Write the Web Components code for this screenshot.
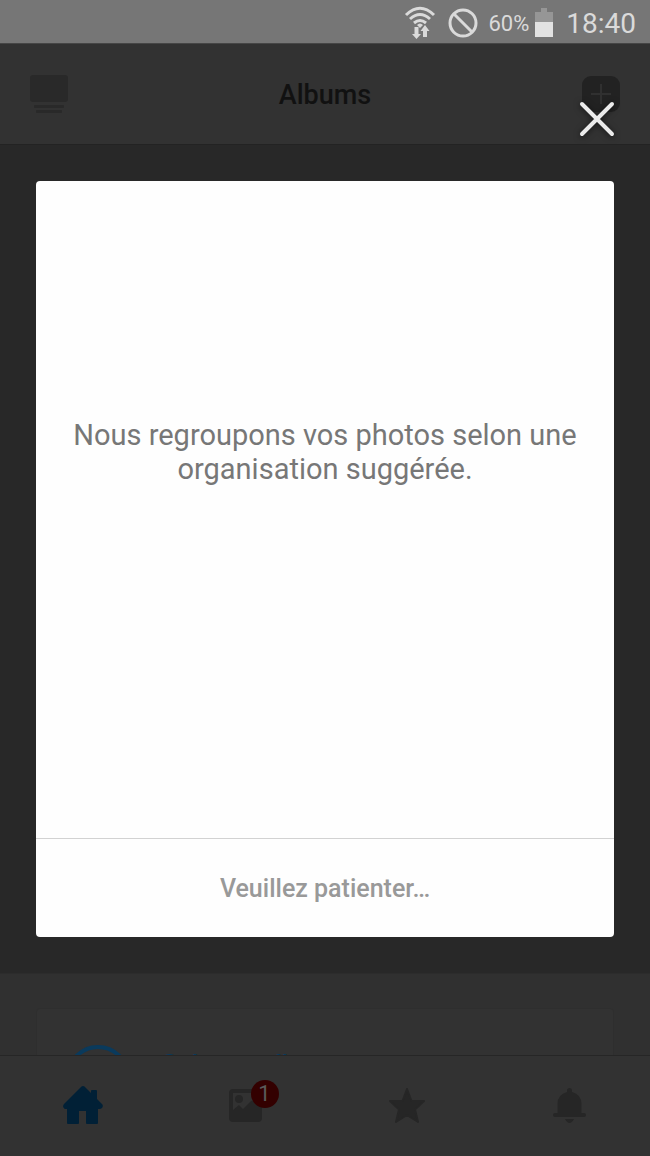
<!DOCTYPE html>
<html lang="fr">
<head>
<meta charset="utf-8">
<meta name="viewport" content="width=device-width, initial-scale=1">
<title>Albums</title>
<style>
  body {
    margin: 0;
    font-family: Roboto, "Liberation Sans", sans-serif;
    background: #282828;
  }
</style>
</head>
<body>
<albums-app></albums-app>

<script>
class StatusBar extends HTMLElement {
  constructor() {
    super();
    this.attachShadow({ mode: 'open' });
  }

  connectedCallback() {
    this.shadowRoot.innerHTML = `
      <style>
        :host {
          display: flex;
          align-items: center;
          justify-content: flex-end;
          height: 43px;
          padding: 2px 14px 0;
          box-sizing: border-box;
          background: #767676;
          color: #dadada;
        }
        svg { display: block; }
        .wifi { margin-right: 12px; }
        .block { margin-right: 10px; }
        .level { font-size: 22px; line-height: 40px; padding-top: 2px; }
        .battery { margin: 0 13px 0 6px; }
        .clock { font-size: 28px; line-height: 40px; padding-top: 2px; }
      </style>
      <svg class="wifi" width="32" height="34" viewBox="0 0 32 34" fill="none" stroke="#dadada" stroke-width="3">
        <path d="M2 9Q16-4.500 30 9"/>
        <path d="M6 13Q16 4 26 13"/>
        <path d="M10 17Q16 12 22 17"/>
        <path d="M13 19Q16 16 19 19L16 22Z" fill="#dadada" stroke="none"/>
        <path d="M10.500 21H14.500V28H17L12.500 33L8 28H10.500ZM19 31V25H16.500L21 19L25.500 25H23V31Z" fill="#dadada" stroke="none"/>
      </svg>
      <svg class="block" width="30" height="30" viewBox="0 0 30 30" fill="none" stroke="#dadada" stroke-width="3">
        <circle cx="15" cy="15" r="13"/>
        <path d="M6 6L24 24"/>
      </svg>
      <span class="level">60%</span>
      <svg class="battery" width="18" height="29" viewBox="0 0 18 29">
        <path fill="#969696" d="M6 0H12V4H18V14H0V4H6Z"/>
        <path fill="#e2e2e2" d="M0 14H18V29H0Z"/>
      </svg>
      <span class="clock">18:40</span>
    `;
  }
}
customElements.define('status-bar', StatusBar);

class AppHeader extends HTMLElement {
  constructor() {
    super();
    this.attachShadow({ mode: 'open' });
  }

  connectedCallback() {
    this.shadowRoot.innerHTML = `
      <style>
        :host {
          display: grid;
          grid-template-columns: 1fr auto 1fr;
          align-items: center;
          height: 102px;
          padding: 0 30px;
          box-sizing: border-box;
          background: #323232;
          border-top: 1px solid #464646;
          border-bottom: 1px solid #232323;
        }
        h1 {
          margin: 0;
          padding-top: 2px;
          font-size: 27px;
          font-weight: 500;
          line-height: 32px;
          color: #111;
        }
        button {
          display: block;
          padding: 0;
          border: 0;
          background: none;
        }
        .add { justify-self: end; }
        svg { display: block; }
      </style>
      <button aria-label="Diaporama">
        <svg width="38" height="38" viewBox="0 0 38 38" fill="#292929">
          <rect width="38" height="27" rx="3"/>
          <rect x="4" y="30" width="30" height="3" rx="1"/>
          <rect x="6" y="35" width="26" height="3" rx="1"/>
        </svg>
      </button>
      <h1><slot></slot></h1>
      <button class="add" aria-label="Ajouter">
        <svg width="38" height="36" viewBox="0 0 38 36">
          <rect width="38" height="36" rx="9" fill="#222"/>
          <path d="M9 18H29M19 8V28" stroke="#303030" stroke-width="2"/>
        </svg>
      </button>
    `;
  }
}
customElements.define('app-header', AppHeader);

class PromoCard extends HTMLElement {
  constructor() {
    super();
    this.attachShadow({ mode: 'open' });
  }

  connectedCallback() {
    this.shadowRoot.innerHTML = `
      <style>
        /* the tab bar hides the lower part of the card */
        :host {
          display: block;
          height: 82px;
          padding: 34px 36px 0;
          box-sizing: border-box;
          overflow: hidden;
          background: #303030;
          border-top: 1px solid #2c2c2c;
        }
        .card {
          display: flex;
          align-items: flex-start;
          gap: 32px;
          height: 160px;
          padding: 36px 32px;
          box-sizing: border-box;
          background: #323232;
          border: 1px solid #2e2e2e;
          border-radius: 4px;
        }
        svg { display: block; }
        a {
          padding-top: 4px;
          font-size: 25px;
          font-weight: 500;
          line-height: 32px;
          color: #0a3a5c;
          text-decoration: none;
        }
      </style>
      <div class="card">
        <svg width="60" height="60" viewBox="0 0 60 60" fill="none" stroke="#0a3a5c" stroke-width="4">
          <circle cx="29" cy="32" r="30"/>
        </svg>
        <a href="#"><slot></slot></a>
      </div>
    `;
  }
}
customElements.define('promo-card', PromoCard);

class TabBar extends HTMLElement {
  constructor() {
    super();
    this.attachShadow({ mode: 'open' });
  }

  connectedCallback() {
    this.shadowRoot.innerHTML = `
      <style>
        :host {
          display: block;
          background: #323232;
          border-top: 1px solid #262626;
        }
        nav {
          display: grid;
          grid-template-columns: repeat(4, 1fr);
          height: 100px;
          padding: 0 0 2px 2px;
          box-sizing: border-box;
        }
        a {
          display: flex;
          align-items: center;
          justify-content: center;
          color: #262626;
        }
        .home { color: #012036; }
        svg { display: block; }
        .photo { position: relative; }
        .badge {
          position: absolute;
          top: -9px;
          left: 22px;
          width: 28px;
          height: 28px;
          border-radius: 50%;
          background: #330000;
          color: #5a5a5a;
          font-size: 22px;
          line-height: 28px;
          text-align: center;
        }
      </style>
      <nav>
        <a class="home" href="#" aria-label="Accueil">
          <svg width="40" height="38" viewBox="0 0 40 38" fill="currentColor">
            <path d="M18.500 .6Q20 -.6 21.500 .6L28 7V5Q28 4 29 4H33Q34 4 34 5V13L39.200 18.300Q40.500 20 39 22Q38 23 36 23H35V37Q35 38 34 38H24Q23 38 23 37V25H16V37Q16 38 15 38H5Q4 38 4 37V23H3Q1 23 .5 21.500Q-.5 20 1 18Z"/>
          </svg>
        </a>
        <a href="#" aria-label="Photos">
          <span class="photo">
            <svg width="33" height="33" viewBox="0 0 33 33">
              <rect width="33" height="33" rx="4" fill="#262626"/>
              <path d="M4 4H29V10L22 12L14 20L10 16L4 21Z" fill="#323232"/>
              <circle cx="10" cy="10" r="4" fill="#262626"/>
            </svg>
            <span class="badge">1</span>
          </span>
        </a>
        <a href="#" aria-label="Favoris">
          <svg width="36" height="35" viewBox="0 0 36 35" fill="currentColor" stroke="currentColor" stroke-width="2" stroke-linejoin="round">
            <path d="M18 1L22.500 13H35L26 21.500L29 34L18 27L7 34L10 21.500L1 13H13.500Z"/>
          </svg>
        </a>
        <a href="#" aria-label="Notifications">
          <svg width="33" height="35" viewBox="0 0 33 35" fill="currentColor">
            <path d="M14 4V2.500A2.500 2.500 0 0 1 19 2.500V4Q28.500 6.500 28.500 16V25H31A2 2 0 0 1 31 29H2A2 2 0 0 1 2 25H4.500V16Q4.500 6.500 14 4ZM12 31H21Q19 35 16.500 35T12 31Z"/>
          </svg>
        </a>
      </nav>
    `;
  }
}
customElements.define('tab-bar', TabBar);

class WaitDialog extends HTMLElement {
  constructor() {
    super();
    this.attachShadow({ mode: 'open' });
  }

  connectedCallback() {
    this.shadowRoot.innerHTML = `
      <style>
        /* lies over the whole page */
        :host {
          position: absolute;
          inset: 0;
          display: flex;
          flex-direction: column;
          padding: 97px 36px 219px;
          box-sizing: border-box;
        }
        .close {
          align-self: flex-end;
          margin-bottom: 40px;
          padding: 4px 0;
          border: 0;
          background: none;
        }
        .close svg { display: block; overflow: visible; filter: drop-shadow(0 1px 3px rgba(0, 0, 0, .6)); }
        .dialog {
          flex: 1;
          display: flex;
          flex-direction: column;
          background: #fefefe;
          border-radius: 4px;
        }
        .message {
          flex: 1;
          margin: 0;
          padding: 237px 36px 0;
          font-size: 29px;
          line-height: 34px;
          text-align: center;
          color: #777;
        }
        .action {
          height: 99px;
          padding: 0;
          border: 0;
          border-top: 1px solid #d2d2d2;
          background: none;
          font-family: inherit;
          font-size: 25px;
          font-weight: 500;
          color: #999;
        }
      </style>
      <button class="close" aria-label="Fermer">
        <svg width="34" height="36" viewBox="0 0 34 36" stroke="#ebebeb" stroke-width="4" stroke-linecap="round">
          <path d="M2 3L32 33M32 3L2 33"/>
        </svg>
      </button>
      <div class="dialog" role="dialog" aria-modal="true">
        <p class="message"><slot></slot></p>
        <button class="action" disabled><slot name="action"></slot></button>
      </div>
    `;
  }
}
customElements.define('wait-dialog', WaitDialog);

class AlbumsApp extends HTMLElement {
  constructor() {
    super();
    this.attachShadow({ mode: 'open' });
  }

  connectedCallback() {
    this.shadowRoot.innerHTML = `
      <style>
        :host {
          position: relative;
          display: flex;
          flex-direction: column;
          min-height: 100vh;
        }
        main { flex: 1; background: #282828; }
      </style>
      <status-bar></status-bar>
      <app-header>Albums</app-header>
      <main></main>
      <promo-card>Créer un album</promo-card>
      <tab-bar></tab-bar>
      <wait-dialog>
        Nous regroupons vos photos selon une organisation suggérée.
        <span slot="action">Veuillez patienter…</span>
      </wait-dialog>
    `;
  }
}
customElements.define('albums-app', AlbumsApp);
</script>
</body>
</html>
